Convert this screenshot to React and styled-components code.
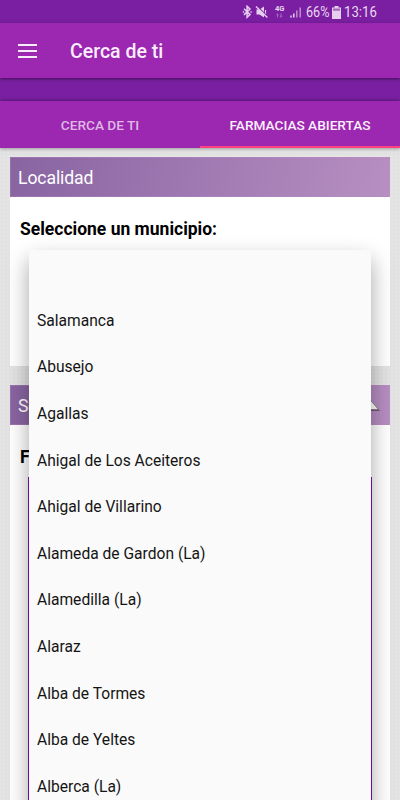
import React, { useState } from 'react';
import styled, { createGlobalStyle } from "styled-components";

const municipios = [
    '',
    'Salamanca',
    'Abusejo',
    'Agallas',
    'Ahigal de Los Aceiteros',
    'Ahigal de Villarino',
    'Alameda de Gardon (La)',
    'Alamedilla (La)',
    'Alaraz',
    'Alba de Tormes',
    'Alba de Yeltes',
    'Alberca (La)',
];

const StatusIcons = () => (
    <svg width="60" height="14" viewBox="0 0 60 14" fill="none">
        {/* bluetooth */}
        <path d="M2 3.8L8 9.6L5.1 12.2V1.3L8 4.1L2 9.9" stroke="#e6cff0" strokeWidth="1.5" />
        <path d="M0.8 6.9h1.4M8.4 6.9h1.4" stroke="#e6cff0" strokeWidth="1.5" />
        {/* muted sound */}
        <path d="M14.5 4.6h3L22 1.4V12.4L17.5 9.4h-3z" fill="#e6cff0" />
        <path d="M23.5 5v4" stroke="#e6cff0" strokeWidth="1.2" />
        <path d="M14.6 0.8L25.8 11.6" stroke="#7b1fa2" strokeWidth="1.2" />
        <path d="M14 1.6L25.4 12.6" stroke="#e6cff0" strokeWidth="1.4" />
        {/* data arrows */}
        <path d="M35.5 8.5v4M34.3 9.8h2.4M39 8.5v4M37.8 11.2h2.4" stroke="#a468be" strokeWidth="1" />
        {/* signal */}
        <path d="M49 10.5v2M51.8 8.5v4" stroke="#e6cff0" strokeWidth="1.5" />
        <path d="M54.8 5.5v7M58.2 2.5v10" stroke="#bd8ed0" strokeWidth="1.5" />
    </svg>
);

const App = () => {
    const [tab, setTab] = useState('abiertas');

    return (
        <Screen>
            <GlobalStyle />
            <StatusBar>
                <Signal>
                    <StatusIcons />
                    <Network>4G</Network>
                </Signal>
                <Percent>66%</Percent>
                <Battery width="9" height="13" viewBox="0 0 9 13">
                    <path d="M2.5 0h4v1.5H9V13H0V1.5h2.5z" fill="#e5d0ee" />
                    <path d="M1 2.5h7v2.2H1z" fill="#a366bd" />
                </Battery>
                <Clock>13:16</Clock>
            </StatusBar>
            <Toolbar>
                <svg width="19" height="14" viewBox="0 0 19 14">
                    <path d="M0 1h19M0 7h19M0 13h19" stroke="#f7eafa" strokeWidth="2" />
                </svg>
                <Title>Cerca de ti</Title>
            </Toolbar>
            <Strip />
            <Tabs>
                <Tab $active={tab === 'cerca'} onClick={() => setTab('cerca')}>CERCA DE TI</Tab>
                <Tab $active={tab === 'abiertas'} onClick={() => setTab('abiertas')}>FARMACIAS ABIERTAS</Tab>
            </Tabs>
            <Content>
                <Card $height="209px" $front>
                    <CardHeader>Localidad</CardHeader>
                    <Label>Seleccione un municipio:</Label>
                    <Menu>
                        {municipios.map((name) => <Option key={name}>{name}</Option>)}
                    </Menu>
                </Card>
                <Card $height="430px">
                    <CardHeader>
                        Se
                        <Arrow width="20" height="14" viewBox="0 0 20 14">
                            <path d="M2 13L11 3L20 13z" fill="#75557f" />
                            <path d="M1 11.5L10 1.5L18.5 11.5z" fill="#fffff8" stroke="#8d8090" strokeWidth="1" />
                        </Arrow>
                    </CardHeader>
                    <Label>F</Label>
                    <Results />
                </Card>
            </Content>
        </Screen>
    );
}

export default App;


const GlobalStyle = createGlobalStyle`
    body {
        margin: 0;
        overflow: hidden;
        font-family: Roboto, "Liberation Sans", sans-serif;
    }

    * {
        box-sizing: border-box;
    }
`

const Screen = styled.div`
    width: 400px;
    height: 800px;
    display: flex;
    flex-direction: column;
    overflow: hidden;
    background-color: #e4e4e4;
    background-image: radial-gradient(#e0e0e0 0.7px, transparent 1px);
    background-size: 4px 4px;
`

const StatusBar = styled.div`
    height: 23px;
    flex-shrink: 0;
    display: flex;
    align-items: center;
    justify-content: flex-end;
    padding: 1px 23px 0 0;
    background: #7b1fa2;
    color: #e9d8f0;
    font-size: 14px;
`

const Signal = styled.div`
    position: relative;
    height: 14px;
    margin-right: 4px;
`

const Network = styled.span`
    position: absolute;
    top: 0;
    left: 33px;
    font-size: 7.5px;
    line-height: 8px;
    font-weight: 700;
`

const Percent = styled.span`
    width: 24px;
    white-space: nowrap;
    transform: scaleX(0.9);
    transform-origin: left;
`

const Battery = styled.svg`
    margin: 0 3px 0 2px;
`

const Clock = styled.span`
    width: 33px;
    transform: scaleX(0.94);
    transform-origin: left;
`

const Toolbar = styled.div`
    height: 55px;
    flex-shrink: 0;
    display: flex;
    align-items: center;
    padding: 0 18px;
    background: #9c27b0;
    color: #fbeefd;
    box-shadow: 0 1px 3px rgba(0, 0, 0, 0.5);
    position: relative;
    z-index: 1;
`

const Title = styled.div`
    margin-left: 33px;
    padding-top: 1px;
    font-size: 19.5px;
    font-weight: 500;
`

const Strip = styled.div`
    height: 23px;
    flex-shrink: 0;
    background: #7b1fa2;
`

const Tabs = styled.div`
    height: 47px;
    flex-shrink: 0;
    display: flex;
    background: #9c27b0;
    box-shadow: 0 0 4px rgba(0, 0, 0, 0.5);
`

const Tab = styled.div`
    width: 50%;
    display: flex;
    align-items: center;
    justify-content: center;
    padding-top: 3px;
    border-bottom: 2px solid ${props => props.$active ? '#ff4081' : 'transparent'};
    color: ${props => props.$active ? '#fbeefd' : '#dfb8e6'};
    font-size: 13.7px;
    font-weight: 500;
    letter-spacing: -0.02px;
    white-space: nowrap;
    cursor: pointer;
`

const Content = styled.div`
    flex: 1;
    display: flex;
    flex-direction: column;
    gap: 19px;
    padding: 9px 10px 0;
`

const Card = styled.div`
    height: ${props => props.$height};
    flex-shrink: 0;
    position: relative;
    z-index: ${props => props.$front ? 1 : 0};
    background: #fff;
`

const CardHeader = styled.div`
    height: 40px;
    display: flex;
    align-items: center;
    justify-content: space-between;
    padding: 2px 8px 0;
    background: linear-gradient(100deg, #8864a1, #b78fc2);
    box-shadow: inset 0 0 0 1px rgba(190, 140, 200, 0.35);
    color: #fff;
    font-size: 17.6px;
    letter-spacing: -0.1px;
`

const Arrow = styled.svg`
    margin-right: 2px;
    margin-bottom: 3px;
`

const Label = styled.div`
    padding: 22px 10px 0;
    height: 52px;
    font-size: 17.5px;
    line-height: 20px;
    font-weight: 700;
    color: #000;
`

/* The open select, hanging over both cards */
const Menu = styled.div`
    position: absolute;
    top: 93px;
    left: 19px;
    width: 342px;
    border-radius: 2px;
    background: #fafafa;
    box-shadow: 0 10px 22px rgba(0, 0, 0, 0.36);
`

const Option = styled.div`
    height: 46.65px;
    padding: 0 8px;
    line-height: 48.4px;
    font-size: 15.6px;
    color: #141414;
`

const Results = styled.div`
    height: 400px;
    margin: 0 18px;
    border: 1px solid #8a0cc0;
`
